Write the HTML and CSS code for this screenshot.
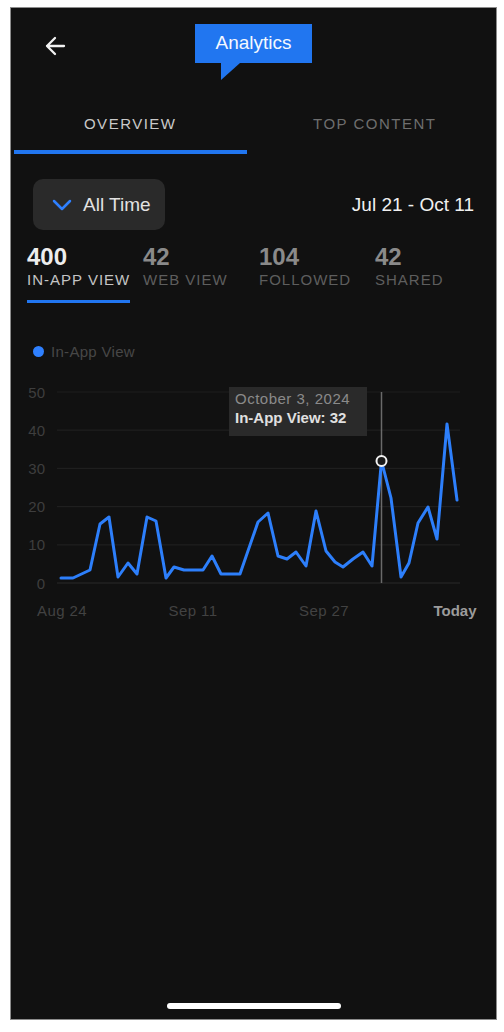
FILE: index.html
```html
<!DOCTYPE html>
<html lang="en">
<head>
<meta charset="utf-8">
<title>Analytics</title>
<link rel="stylesheet" href="styles.css">
</head>
<body>
<div class="phone">
  <header class="header">
    <button class="back" aria-label="Back">
      <svg width="22" height="20" viewBox="0 0 22 20"><path d="M20 10H3M11 2L3 10L11 18" fill="none" stroke="#f2f2f2" stroke-width="2.3" stroke-linecap="round" stroke-linejoin="round"/></svg>
    </button>
    <div class="bubble">Analytics</div>
    <div></div>
  </header>

  <nav class="tabs">
    <div class="tab active">OVERVIEW</div>
    <div class="tab">TOP CONTENT</div>
  </nav>

  <div class="controls">
    <div class="dropdown">
      <svg width="20" height="12" viewBox="0 0 20 12"><polyline points="2,2 10,10 18,2" fill="none" stroke="#2f80ff" stroke-width="2.5" stroke-linecap="round" stroke-linejoin="round"/></svg>
      <span>All Time</span>
    </div>
    <div class="range">Jul 21 - Oct 11</div>
  </div>

  <div class="stats">
    <div class="stat active"><div class="num">400</div><div class="lbl">IN-APP VIEW</div></div>
    <div class="stat"><div class="num">42</div><div class="lbl">WEB VIEW</div></div>
    <div class="stat"><div class="num">104</div><div class="lbl">FOLLOWED</div></div>
    <div class="stat"><div class="num">42</div><div class="lbl">SHARED</div></div>
  </div>

  <div class="legend"><span class="dot"></span><span>In-App View</span></div>

  <svg class="chart" width="484" height="270" viewBox="11 361 484 270">
    <g class="grid">
      <line x1="57" y1="392" x2="460" y2="392"/>
      <line x1="57" y1="430.2" x2="460" y2="430.2"/>
      <line x1="57" y1="468.4" x2="460" y2="468.4"/>
      <line x1="57" y1="506.6" x2="460" y2="506.6"/>
      <line x1="57" y1="544.8" x2="460" y2="544.8"/>
      <line class="base" x1="57" y1="583" x2="460" y2="583"/>
    </g>
    <g class="ylab">
      <text x="45" y="397.5">50</text>
      <text x="45" y="435.7">40</text>
      <text x="45" y="473.9">30</text>
      <text x="45" y="512.1">20</text>
      <text x="45" y="550.3">10</text>
      <text x="45" y="588.5">0</text>
    </g>
    <g class="xlab">
      <text x="62" y="616">Aug 24</text>
      <text x="193" y="616">Sep 11</text>
      <text x="324" y="616">Sep 27</text>
      <text class="today" x="455" y="616">Today</text>
    </g>
    <rect class="tip" x="229" y="387" width="138" height="49"/>
    <text class="tip-date" x="235" y="403.5">October 3, 2024</text>
    <text class="tip-val" x="235" y="422.5">In-App View: 32</text>
    <line class="cursor" x1="381.5" y1="392" x2="381.5" y2="583"/>
    <polyline class="series" points="61,578 73,578 90,570 100,524 109,517 118,577 128,563 137,574 147,517 156,521 166,578 174,567 184,570 203,570 212,556 221,574 240,574 258,522 268,513 278,556 287,559 296,552 306,566 316,511 326,551 335,562 343,567 353,559 363,552 372,566 381.5,461 391,498 401,577 409,563 418,523 428,507 437,539 447,424 457,500"/>
    <circle class="marker" cx="381.5" cy="461" r="5"/>
  </svg>

  <div class="home-bar"></div>
</div>
</body>
</html>
```

FILE: styles.css
```css
* { box-sizing: border-box; }

html, body {
  margin: 0;
  padding: 0;
  background: #ffffff;
}

body {
  font-family: "Liberation Sans", Arial, sans-serif;
}

.phone {
  width: 487px;
  height: 1013px;
  margin: 7px 0 0 10px;
  background: #111111;
  border: 1px solid #8c8c8c;
  display: flex;
  flex-direction: column;
}

.header {
  height: 80px;
  padding-top: 16px;
  display: grid;
  grid-template-columns: 1fr auto 1fr;
  align-items: start;
}

.back {
  justify-self: start;
  margin: 2px 0 0 33px;
  padding: 0;
  width: 22px;
  height: 39px;
  background: none;
  border: 0;
  display: flex;
  align-items: center;
}

.bubble {
  position: relative;
  width: 117px;
  height: 39px;
  background: #2176f0;
  color: #f4f8ff;
  font-size: 19px;
  display: flex;
  align-items: center;
  justify-content: center;
  padding-bottom: 2px;
}

.bubble::after {
  content: "";
  position: absolute;
  left: 26px;
  top: 39px;
  border-top: 17px solid #2176f0;
  border-right: 19px solid transparent;
}

.tabs {
  display: grid;
  grid-template-columns: 1fr 1fr;
  column-gap: 12px;
  padding: 0 5px 0 3px;
}

.tab {
  padding: 26px 0 16px;
  line-height: 20px;
  font-size: 15px;
  letter-spacing: 1.5px;
  text-align: center;
  color: #6e6e6e;
  border-bottom: 4px solid transparent;
}

.tab.active {
  color: #c9c9c9;
  border-bottom-color: #2176f0;
}

.controls {
  margin-top: 25px;
  padding: 0 22px;
  display: flex;
  align-items: center;
  justify-content: space-between;
}

.dropdown {
  width: 132px;
  height: 51px;
  border-radius: 10px;
  background: #2a2a2a;
  display: flex;
  align-items: center;
  gap: 11px;
  padding-left: 19px;
  color: #e2e2e2;
  font-size: 19px;
}

.range {
  color: #f0f0f0;
  font-size: 19px;
}

.stats {
  margin-top: 13px;
  padding-left: 16px;
  display: grid;
  grid-template-columns: repeat(4, 116px);
}

.stat {
  justify-self: start;
  padding-bottom: 11px;
  border-bottom: 3px solid transparent;
}

.stat.active {
  border-bottom-color: #2176f0;
}

.num {
  font-size: 24px;
  line-height: 28px;
  font-weight: bold;
  color: #8a8a8a;
}

.lbl {
  font-size: 15px;
  line-height: 18px;
  letter-spacing: 1px;
  color: #5e5e5e;
}

.stat.active .num { color: #ededed; }
.stat.active .lbl { color: #c4c4c4; }

.legend {
  margin-top: 38px;
  padding-left: 22px;
  height: 20px;
  display: flex;
  align-items: center;
  gap: 7px;
  font-size: 15px;
  letter-spacing: 0.3px;
  color: #474747;
}

.dot {
  width: 11px;
  height: 11px;
  border-radius: 50%;
  background: #2f80ff;
}

.chart {
  display: block;
  font-family: "Liberation Sans", Arial, sans-serif;
}

.grid line {
  stroke: #1f1f1f;
  stroke-width: 1.2;
}

.grid line.base {
  stroke: #2a2a2a;
}

.ylab text {
  fill: #3e3e3e;
  font-size: 15px;
  text-anchor: end;
}

.xlab text {
  fill: #424242;
  font-size: 15px;
  letter-spacing: 0.4px;
  text-anchor: middle;
}

.xlab text.today {
  fill: #9c9c9c;
  font-weight: bold;
  letter-spacing: 0;
}

.tip {
  fill: #2a2a2a;
}

.tip-date {
  fill: #8a8a8a;
  font-size: 15px;
  letter-spacing: 0.5px;
}

.tip-val {
  fill: #e0e0e0;
  font-size: 15px;
  font-weight: bold;
}

.cursor {
  stroke: #6a6a6a;
  stroke-width: 1.5;
}

.series {
  fill: none;
  stroke: #2d7ffb;
  stroke-width: 3;
  stroke-linejoin: round;
  stroke-linecap: round;
}

.marker {
  fill: #1a1a1a;
  stroke: #f2f2f2;
  stroke-width: 2;
}

.home-bar {
  margin: auto auto 10px;
  width: 174px;
  height: 6px;
  border-radius: 3px;
  background: #ffffff;
}
```
